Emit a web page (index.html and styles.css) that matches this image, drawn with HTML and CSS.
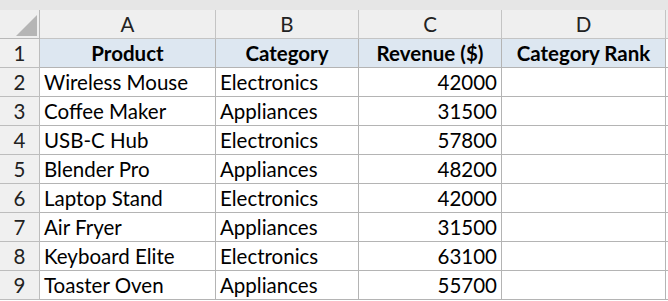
FILE: index.html
```html
<!DOCTYPE html>
<html lang="en">
<head>
<meta charset="utf-8">
<title>Sheet</title>
<link rel="stylesheet" href="styles.css">
</head>
<body>
<div class="topbar"></div>
<div class="sheet">
  <div class="c corner"><div class="tri"></div></div>
  <div class="c colh">A</div>
  <div class="c colh">B</div>
  <div class="c colh">C</div>
  <div class="c colh">D</div>
  <div class="c colh rest"></div>

  <div class="c rowh">1</div>
  <div class="c hd">Product</div>
  <div class="c hd">Category</div>
  <div class="c hd">Revenue ($)</div>
  <div class="c hd">Category Rank</div>
  <div class="c rest"></div>

  <div class="c rowh">2</div>
  <div class="c">Wireless Mouse</div>
  <div class="c">Electronics</div>
  <div class="c num">42000</div>
  <div class="c"></div>
  <div class="c rest"></div>

  <div class="c rowh">3</div>
  <div class="c">Coffee Maker</div>
  <div class="c">Appliances</div>
  <div class="c num">31500</div>
  <div class="c"></div>
  <div class="c rest"></div>

  <div class="c rowh">4</div>
  <div class="c">USB-C Hub</div>
  <div class="c">Electronics</div>
  <div class="c num">57800</div>
  <div class="c"></div>
  <div class="c rest"></div>

  <div class="c rowh">5</div>
  <div class="c">Blender Pro</div>
  <div class="c">Appliances</div>
  <div class="c num">48200</div>
  <div class="c"></div>
  <div class="c rest"></div>

  <div class="c rowh">6</div>
  <div class="c">Laptop Stand</div>
  <div class="c">Electronics</div>
  <div class="c num">42000</div>
  <div class="c"></div>
  <div class="c rest"></div>

  <div class="c rowh">7</div>
  <div class="c">Air Fryer</div>
  <div class="c">Appliances</div>
  <div class="c num">31500</div>
  <div class="c"></div>
  <div class="c rest"></div>

  <div class="c rowh">8</div>
  <div class="c">Keyboard Elite</div>
  <div class="c">Electronics</div>
  <div class="c num">63100</div>
  <div class="c"></div>
  <div class="c rest"></div>

  <div class="c rowh">9</div>
  <div class="c">Toaster Oven</div>
  <div class="c">Appliances</div>
  <div class="c num">55700</div>
  <div class="c"></div>
  <div class="c rest"></div>
</div>
</body>
</html>
```
FILE: styles.css
```css
html, body {
  margin: 0;
  padding: 0;
  background: #ffffff;
}
body {
  font-family: Lato, "Open Sans", sans-serif;
  font-size: 20.5px;
  color: #000;
  overflow: hidden;
}
.topbar {
  height: 10px;
  background: #e6e6e6;
}
.sheet {
  display: grid;
  grid-template-columns: 40px 176px 143px 143px 164px 1fr;
  grid-auto-rows: 29px;
}
.c {
  box-sizing: border-box;
  border-right: 1px solid #b4b4b4;
  border-bottom: 1px solid #b4b4b4;
  display: flex;
  align-items: center;
  padding: 0 4px;
  line-height: 28px;
  white-space: nowrap;
  overflow: hidden;
}
.colh {
  background: #efefef;
  border-color: #c4c4c4;
  justify-content: center;
  color: #222;
}
.corner {
  background: #efefef;
  border-color: #b8b8b8;
  justify-content: flex-end;
  align-items: flex-end;
  padding: 0 2px 2px 0;
}
.tri {
  width: 21px;
  height: 21px;
  background: #b5b5b5;
  clip-path: polygon(100% 0, 100% 100%, 0 100%);
}
.rowh {
  background: #f0f0f0;
  border-color: #bdbdbd;
  justify-content: center;
  color: #222;
  padding: 0;
}
.hd {
  background: #dde7f1;
  font-weight: bold;
  justify-content: center;
}
.num {
  justify-content: flex-end;
}
.rest {
  border-right: none;
  padding: 0;
}
```
